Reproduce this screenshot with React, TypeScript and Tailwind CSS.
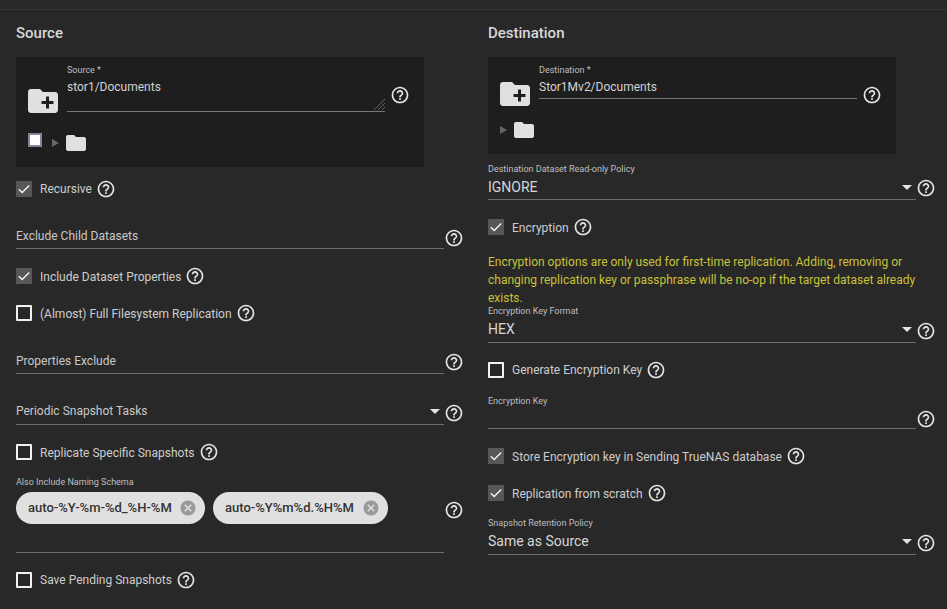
import type { ReactNode } from "react";

const HELP =
  "M11 18h2v-2h-2v2zm1-16C6.48 2 2 6.48 2 12s4.48 10 10 10 10-4.48 10-10S17.52 2 12 2zm0 18c-4.41 0-8-3.59-8-8s3.59-8 8-8 8 3.59 8 8-3.59 8-8 8zm0-14c-2.21 0-4 1.79-4 4h2c0-1.1.9-2 2-2s2 .9 2 2c0 2-3 1.75-3 5h2c0-2.25 3-2.5 3-5 0-2.21-1.79-4-4-4z";
const FOLDER =
  "M10 4H4c-1.1 0-1.99.9-1.99 2L2 18c0 1.1.9 2 2 2h16c1.1 0 2-.9 2-2V8c0-1.1-.9-2-2-2h-8l-2-2z";
const NEW_FOLDER =
  "M20 6h-8l-2-2H4c-1.11 0-1.99.89-1.99 2L2 18c0 1.11.89 2 2 2h16c1.11 0 2-.89 2-2V8c0-1.11-.89-2-2-2zm-1 8h-3v3h-2v-3h-3v-2h3V9h2v3h3v2z";
const CANCEL =
  "M12 2C6.47 2 2 6.47 2 12s4.47 10 10 10 10-4.47 10-10S17.53 2 12 2zm5 13.59L15.59 17 12 13.41 8.41 17 7 15.59 10.59 12 7 8.41 8.41 7 12 10.59 15.59 7 17 8.41 13.41 12 17 15.59z";

function Icon({ d, className }: { d: string; className: string }) {
  return (
    <svg viewBox="0 0 24 24" className={className} fill="currentColor">
      <path d={d} fillRule="evenodd" />
    </svg>
  );
}

function Help({ className = "" }: { className?: string }) {
  return <Icon d={HELP} className={`h-5 w-5 shrink-0 text-[#e4e4e4] ${className}`} />;
}

function Check({
  label,
  checked,
  low,
  mt = "mt-[17px]",
}: {
  label: string;
  checked?: boolean;
  low?: boolean;
  mt?: string;
}) {
  return (
    <div className={`flex h-5 items-center ${mt}`}>
      {checked ? (
        <span className="flex h-4 w-4 items-center justify-center bg-[#575757]">
          <svg viewBox="0 0 16 16" className="h-4 w-4" fill="none" stroke="#f4f4f4" strokeWidth="1.4">
            <path d="M2.8 8.2l3.4 3.4 7-7" />
          </svg>
        </span>
      ) : (
        <span className="h-4 w-4 rounded-[1px] border-2 border-[#f2f2f2]" />
      )}
      <span className={`ml-2 text-[12px] text-[#cdcdcd] ${low ? "mt-[2px]" : ""}`}>{label}</span>
      <Help className="ml-1" />
    </div>
  );
}

function Field({
  label,
  value,
  placeholder,
  select,
  height,
  lifted,
  helpMb = "mb-[2px]",
}: {
  label?: string;
  value?: string;
  placeholder?: string;
  select?: boolean;
  height: string;
  lifted?: boolean;
  helpMb?: string;
}) {
  return (
    <div className={`flex w-[448px] items-end ${height}`}>
      <div className="w-[428px]">
        {label && <div className="h-3 text-[9px] leading-3 text-[#bfbfbf]">{label}</div>}
        <div className={`flex items-center justify-between ${value || placeholder ? "h-6" : "h-[21px]"} ${lifted ? "mb-px" : ""}`}>
          {value && <span className="text-[14px] text-[#d6d6d6]">{value}</span>}
          {placeholder && <span className="text-[12px] text-[#c8c8c8]">{placeholder}</span>}
          {select && <span className="ml-auto mr-[4px] h-0 w-0 border-x-[5px] border-t-[5px] border-x-transparent border-t-[#e4e4e4]" />}
        </div>
        <div className="h-px bg-[#6e6e6e]" />
      </div>
      <Help className={helpMb} />
    </div>
  );
}

function Tree({ checkbox, mt }: { checkbox?: boolean; mt: string }) {
  return (
    <div className={`flex h-6 items-center pl-[12px] ${mt}`}>
      {checkbox && <span className="mb-[6px] mr-[10px] h-[14px] w-[14px] border-2 border-[#85849c] bg-white" />}
      <svg viewBox="0 0 8 8" className="h-2 w-2 text-[#666666]" fill="currentColor">
        <path d="M0 0l7 4-7 4z" />
      </svg>
      <Icon d={FOLDER} className="ml-[4px] h-6 w-6 text-[#e0e0e0]" />
    </div>
  );
}

function Panel({ label, value, height, source }: { label: string; value: string; height: string; source?: boolean }) {
  return (
    <div className={`w-[408px] bg-[#1e1e1e] pt-[7px] ${height}`}>
      <div className="flex items-start pl-[9px]">
        <Icon d={NEW_FOLDER} className={`h-9 w-9 shrink-0 text-[#e0e0e0] ${source ? "mt-[19px]" : "mt-[12px]"}`} />
        <div className="relative ml-[6px] w-[318px]">
          <div className="h-3 text-[9px] leading-3 text-[#bfbfbf]">{label}</div>
          <div className={`text-[12px] leading-[22px] text-[#d2d2d2] ${source ? "h-[35px]" : "h-[22px]"}`}>{value}</div>
          {source && (
            <svg viewBox="0 0 11 11" className="absolute bottom-[2px] right-0 h-[11px] w-[11px]" stroke="#777777" strokeWidth="0.8">
              <path d="M0 11L11 0M4 11l7-7M8 11l3-3" />
            </svg>
          )}
          <div className="h-px bg-[#777777]" />
        </div>
        <Help className="ml-[5px] mt-[21px]" />
      </div>
      <Tree checkbox={source} mt={source ? "mt-[12px]" : "mt-[6px]"} />
    </div>
  );
}

function Chip({ text, width }: { text: string; width: string }) {
  return (
    <span className={`flex h-8 items-center justify-between rounded-full bg-[#e0e0e0] pl-3 pr-2 text-[13px] font-medium text-[#333333] ${width}`}>
      {text}
      <Icon d={CANCEL} className="h-[18px] w-[18px] text-[#9a9a9a]" />
    </span>
  );
}

function Section({ title, children }: { title: string; children: ReactNode }) {
  return (
    <section className="pl-4">
      <h2 className="flex h-[47px] items-center text-[15px] font-medium text-[#d8d8d8]">{title}</h2>
      {children}
    </section>
  );
}

export default function App() {
  return (
    <main className="h-[609px] w-[947px] overflow-hidden bg-[#282828] font-['Roboto',sans-serif]">
      <div className="h-[10px] border-b border-[#363636]" />
      <div className="grid grid-cols-[472px_475px]">
        <Section title="Source">
          <Panel label="Source *" value="stor1/Documents" height="h-[110px]" source />
          <Check label="Recursive" checked mt="mt-[12px]" />
          <Field placeholder="Exclude Child Datasets" height="h-[50px]" helpMb="mb-px" />
          <Check label="Include Dataset Properties" checked low />
          <Check label="(Almost) Full Filesystem Replication" low />
          <Field placeholder="Properties Exclude" height="h-[51px]" />
          <Field placeholder="Periodic Snapshot Tasks" select lifted height="h-[51px]" />
          <Check label="Replicate Specific Snapshots" low />
          <div className="flex h-[91px] w-[448px] items-start">
            <div className="w-[428px]">
              <div className="mt-[14px] h-3 text-[9px] leading-3 text-[#bfbfbf]">Also Include Naming Schema</div>
              <div className="mt-[4px] flex h-[60px] gap-2">
                <Chip text="auto-%Y-%m-%d_%H-%M" width="w-[189px]" />
                <Chip text="auto-%Y%m%d.%H%M" width="w-[175px]" />
              </div>
              <div className="h-px bg-[#6e6e6e]" />
            </div>
            <Help className="mt-[38px]" />
          </div>
          <Check label="Save Pending Snapshots" />
        </Section>

        <Section title="Destination">
          <Panel label="Destination *" value="Stor1Mv2/Documents" height="h-[97px]" />
          <Field label="Destination Dataset Read-only Policy" value="IGNORE" select height="h-[46px]" />
          <Check label="Encryption" checked low />
          <p className="mt-4 w-[432px] text-[12px] leading-[18px] text-[#c9c23a]">
            Encryption options are only used for first-time replication. Adding, removing or changing replication key or passphrase will be no-op if the target dataset already exists.
          </p>
          <Field label="Encryption Key Format" value="HEX" select lifted height="h-[36px]" />
          <Check label="Generate Encryption Key" />
          <Field label="Encryption Key" height="h-[49px]" helpMb="mb-0" />
          <Check label="Store Encryption key in Sending TrueNAS database" checked low />
          <Check label="Replication from scratch" checked low />
          <Field label="Snapshot Retention Policy" value="Same as Source" select lifted height="h-[52px]" />
        </Section>
      </div>
    </main>
  );
}
